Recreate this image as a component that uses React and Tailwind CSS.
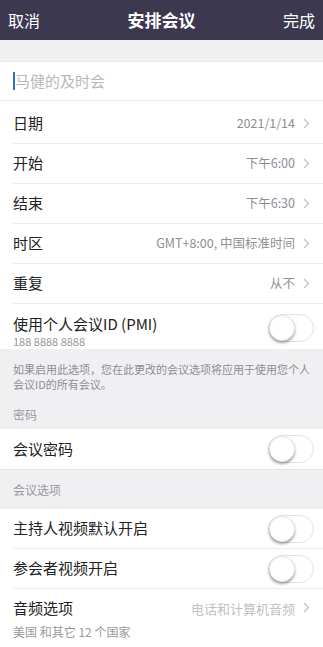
import React from "react";

const font = { fontFamily: '"Noto Sans CJK SC", "Noto Sans", sans-serif' };

const Chevron = () => (
  <svg width="7" height="11" viewBox="0 0 7 11" className="ml-2 shrink-0">
    <path d="M1 1l4.5 4.5L1 10" fill="none" stroke="#c4c4c8" strokeWidth="1.4" />
  </svg>
);

const Toggle = () => (
  <div className="relative w-[46px] h-[28px] rounded-full border border-[#e2e2e4] bg-white shrink-0">
    <div className="absolute left-0 top-0 w-[26px] h-[26px] rounded-full bg-white shadow-[0_2px_3px_rgba(0,0,0,0.35)] border border-[#e6e6e6]" />
  </div>
);

const NavRow = ({ label, value, last }) => (
  <div className="pl-[13px] bg-white">
    <div className={`h-[40px] flex items-center pr-[13px] ${last ? "" : "border-b border-[#ececee]"}`}>
      <span className="text-[15px] text-[#222]">{label}</span>
      <span className="ml-auto text-[12.5px] text-[#8e8e93]">{value}</span>
      <Chevron />
    </div>
  </div>
);

const SwitchRow = ({ label, last }) => (
  <div className="pl-[13px] bg-white">
    <div className={`h-[40px] flex items-center pr-[9px] ${last ? "" : "border-b border-[#ececee]"}`}>
      <span className="text-[15px] text-[#222]">{label}</span>
      <div className="ml-auto">
        <Toggle />
      </div>
    </div>
  </div>
);

export default function App() {
  return (
    <div className="w-[323px] h-[647px] overflow-hidden bg-[#f0f0f2]" style={font}>
      {/* 顶部栏 */}
      <div className="h-[40px] bg-[#3b3850] flex items-center px-[8px] text-white">
        <span className="text-[16px]">取消</span>
        <span className="flex-1 text-center text-[17px] font-bold">安排会议</span>
        <span className="text-[16px]">完成</span>
      </div>

      <div className="h-[21px]" />

      {/* 会议主题 */}
      <div className="h-[40px] bg-white flex items-center px-[13px] border-y border-[#e8e8ea]">
        <span className="w-[2px] h-[18px] bg-[#2f6fd0]" />
        <span className="text-[15px] text-[#b8b8bc]">马健的及时会</span>
      </div>

      <div className="h-[3px] bg-white" />

      <NavRow label="日期" value="2021/1/14" />
      <NavRow label="开始" value="下午6:00" />
      <NavRow label="结束" value="下午6:30" />
      <NavRow label="时区" value="GMT+8:00, 中国标准时间" />
      <NavRow label="重复" value="从不" />

      <div className="pl-[13px] pr-[9px] bg-white h-[45px] flex items-start">
        <div className="flex flex-col leading-tight pt-[11px]">
          <span className="text-[15px] text-[#222]">使用个人会议ID (PMI)</span>
          <span className="text-[11px] text-[#999] mt-[1px]">188 8888 8888</span>
        </div>
        <div className="ml-auto mt-[10px]">
          <Toggle />
        </div>
      </div>

      <div className="pl-[13px] pr-[8px] pt-[13px] pb-[9px] text-[11px] leading-[15px] text-[#8e8e93]">
        如果启用此选项，您在此更改的会议选项将应用于使用您个人会议ID的所有会议。
      </div>
      <div className="px-[13px] h-[28px] flex items-center text-[12px] text-[#9a9a9e]">密码</div>

      <SwitchRow label="会议密码" last />

      <div className="px-[13px] h-[40px] flex items-center text-[12px] text-[#9a9a9e] border-t border-[#e4e4e6]">会议选项</div>

      <SwitchRow label="主持人视频默认开启" />
      <SwitchRow label="参会者视频开启" />

      <div className="pl-[13px] pr-[13px] bg-white h-[60px] flex items-center">
        <div className="flex flex-col">
          <span className="text-[15px] text-[#222]">音频选项</span>
          <span className="text-[12px] text-[#999] mt-[3px]">美国 和其它 12 个国家</span>
        </div>
        <span className="ml-auto self-start mt-[10px] text-[13px] text-[#c0c0c4]">电话和计算机音频</span>
        <span className="self-start mt-[13px]"><Chevron /></span>
      </div>
    </div>
  );
}
